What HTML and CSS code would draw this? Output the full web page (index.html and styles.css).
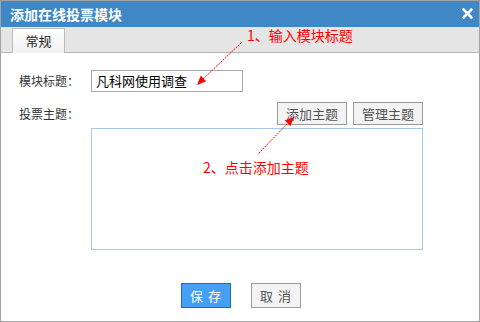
FILE: index.html
```html
<!DOCTYPE html>
<html lang="zh">
<head>
<meta charset="utf-8">
<link rel="stylesheet" href="styles.css">
</head>
<body>
<div class="dialog">
  <div class="titlebar">
    <span class="title">添加在线投票模块</span>
    <svg class="close" width="11" height="11" viewBox="0 0 11 11"><path d="M1.5 1.5 L9.5 9.5 M9.5 1.5 L1.5 9.5" stroke="#fff" stroke-width="2.6" stroke-linecap="square"/></svg>
  </div>
  <div class="tabbar">
    <div class="tab">常规</div>
  </div>
  <div class="form">
    <div class="label row1">模块标题：</div>
    <div class="field row1"><div class="input">凡科网使用调查</div></div>
    <div class="label row2">投票主题：</div>
    <div class="field">
      <div class="btns">
        <div class="btn">添加主题</div>
        <div class="btn">管理主题</div>
      </div>
      <div class="area"></div>
    </div>
  </div>
  <div class="footer">
    <div class="btn primary">保 存</div>
    <div class="btn wide">取 消</div>
  </div>
  <div class="note note1">1、输入模块标题</div>
  <div class="note note2">2、点击添加主题</div>
  <svg class="arrows" width="480" height="322" viewBox="0 0 480 322">
    <line x1="241.5" y1="42.5" x2="202" y2="80" stroke="#f00" stroke-width="1" stroke-dasharray="2 1"/>
    <polygon points="197,85 206.2,81.2 203.5,78.5 200.8,75.6" fill="#f00"/>
    <line x1="258.5" y1="153.5" x2="289" y2="122" stroke="#f00" stroke-width="1" stroke-dasharray="2 1"/>
    <polygon points="294,117 290.4,126.2 287.7,123.3 284.8,120.6" fill="#f00"/>
  </svg>
</div>
</body>
</html>
```

FILE: styles.css
```css
* { box-sizing: border-box; }
html, body { margin: 0; padding: 0; background: #fff; }
body { font-family: "Noto Sans CJK SC", "Liberation Sans", sans-serif; }
.dialog {
  position: relative;
  width: 480px;
  height: 322px;
  border: 1px solid #a3a3a3;
  background: #fff;
  overflow: hidden;
}
.titlebar {
  height: 26px;
  background: #3f87c5;
  display: flex;
  align-items: center;
  justify-content: space-between;
  padding: 0 6px 0 9px;
}
.title {
  color: #fff;
  font-weight: bold;
  font-size: 14px;
  line-height: 26px;
}
.close { display: block; margin-top: -1px; }
.tabbar {
  height: 26px;
  background: #e5e5e5;
  border-bottom: 1px solid #b5b5b5;
  padding: 1px 0 0 11px;
  display: flex;
}
.tab {
  width: 53px;
  height: 25px;
  border: 1px solid #bcbcbc;
  border-bottom: none;
  background: linear-gradient(#ffffff, #f2f2f2);
  font-size: 13px;
  color: #222;
  text-align: center;
  line-height: 24px;
}
.form {
  display: grid;
  grid-template-columns: 72px 332px;
  padding: 17px 0 0 18px;
  row-gap: 10px;
  align-items: start;
}
.label {
  font-size: 12px;
  color: #333;
}
.label.row1 { line-height: 22px; }
.label.row2 { line-height: 23px; }
.input {
  width: 152px;
  height: 22px;
  border: 1px solid #a8a8a8;
  font-size: 13px;
  line-height: 20px;
  padding-left: 4px;
  color: #000;
}
.btns {
  display: flex;
  justify-content: flex-end;
  gap: 6px;
  margin-bottom: 3px;
}
.btn {
  width: 70px;
  height: 23px;
  border: 1px solid #9a9a9a;
  background: #f3f3f3;
  color: #555;
  font-size: 13px;
  text-align: center;
  line-height: 21px;
}
.area {
  width: 332px;
  height: 122px;
  border: 1px solid #a9c9ec;
}
.footer {
  display: flex;
  justify-content: center;
  gap: 20px;
  margin-top: 33px;
  padding-left: 2px;
}
.footer .btn {
  width: 50px;
  height: 25px;
  line-height: 23px;
  letter-spacing: 1px;
}
.btn.primary {
  background: #45a0f5;
  border-color: #1b6ec2;
  color: #fff;
}
.note {
  position: absolute;
  color: #f00;
  font-size: 14px;
  line-height: 16px;
  white-space: nowrap;
}
.note1 { left: 246px; top: 26px; }
.note2 { left: 202px; top: 158px; }
.arrows {
  position: absolute;
  left: -1px;
  top: -1px;
  pointer-events: none;
}
```
